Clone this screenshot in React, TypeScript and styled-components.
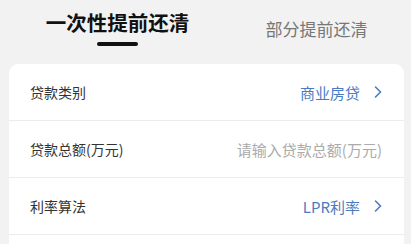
import styled, { createGlobalStyle } from "styled-components";

const GlobalStyle = createGlobalStyle`
  html, body {
    margin: 0;
    padding: 0;
    background: #f2f2f2;
    font-family: "Noto Sans CJK SC", "Noto Sans", sans-serif;
  }
`;

const Page = styled.div`
  width: 411px;
  height: 244px;
  overflow: hidden;
  background: #f2f2f2;
`;

const TabBar = styled.div`
  display: flex;
  align-items: flex-start;
  height: 64px;
  padding-left: 18px;
  box-sizing: border-box;
`;

const Tab = styled.div<{ $active?: boolean }>`
  flex: none;
  width: 199px;
  display: flex;
  flex-direction: column;
  align-items: center;
  padding-top: ${(p) => (p.$active ? "8px" : "15px")};
  font-size: ${(p) => (p.$active ? "20.5px" : "17px")};
  font-weight: ${(p) => (p.$active ? 700 : 400)};
  color: ${(p) => (p.$active ? "#111" : "#777")};
  line-height: 28px;
`;

const Underline = styled.div`
  margin-top: 6px;
  width: 41px;
  height: 4px;
  border-radius: 2px;
  background: #111;
`;

const Card = styled.div`
  margin: 0 7px 0 9px;
  background: #fff;
  border-radius: 9px 9px 0 0;
`;

const Row = styled.div`
  display: flex;
  align-items: center;
  justify-content: space-between;
  height: 56px;
  padding: 0 22px 0 21px;
  border-bottom: 1px solid #ececec;
`;

const Label = styled.span`
  color: #333;
  font-size: 14px;
`;

const Value = styled.span<{ $placeholder?: boolean }>`
  display: flex;
  align-items: center;
  gap: 14px;
  font-size: 15px;
  color: ${(p) => (p.$placeholder ? "#ababab" : "#4a7cc2")};
`;

const Chevron = () => (
  <svg width="8" height="12" viewBox="0 0 8 12">
    <polyline
      points="1.5,1 6.5,6 1.5,11"
      fill="none"
      stroke="#4a7cc2"
      strokeWidth="1.6"
      strokeLinecap="round"
      strokeLinejoin="round"
    />
  </svg>
);

export default function App() {
  return (
    <Page>
      <GlobalStyle />
      <TabBar>
        <Tab $active>
          一次性提前还清
          <Underline />
        </Tab>
        <Tab>部分提前还清</Tab>
      </TabBar>
      <Card>
        <Row>
          <Label>贷款类别</Label>
          <Value>
            商业房贷
            <Chevron />
          </Value>
        </Row>
        <Row>
          <Label>贷款总额(万元)</Label>
          <Value $placeholder>请输入贷款总额(万元)</Value>
        </Row>
        <Row>
          <Label>利率算法</Label>
          <Value>
            LPR利率
            <Chevron />
          </Value>
        </Row>
        <Row />
      </Card>
    </Page>
  );
}
